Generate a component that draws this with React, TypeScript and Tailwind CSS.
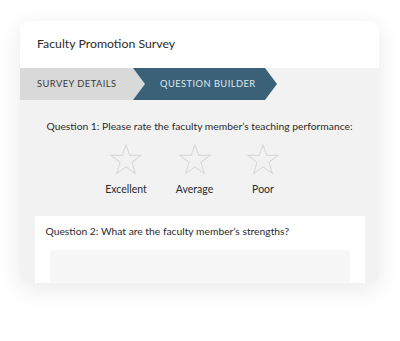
import React from 'react';

const Star: React.FC = () => (
  <svg width="34" height="31" viewBox="0 0 34 31" fill="none" stroke="#d9d9d9" strokeWidth="1.1">
    <polygon points="17,1 20.8,11.4 32,11.4 23,18.3 26.3,29.5 17,22.9 7.7,29.5 11,18.3 2,11.4 13.2,11.4" />
  </svg>
);

const ratings = ['Excellent', 'Average', 'Poor'];

export default function App() {
  return (
    <div className="w-[400px] h-[341px] bg-white pt-[21px] pl-[20px] font-['Lato',sans-serif] text-[#2b2b2b]">
      <div className="w-[359px] h-[262px] rounded-lg overflow-hidden bg-[#f2f2f2] shadow-[0_6px_24px_rgba(0,0,0,0.09)] flex flex-col">
        {/* header */}
        <div className="h-[47px] shrink-0 bg-white flex items-center px-[17px] text-[12.3px]">
          Faculty Promotion Survey
        </div>

        {/* steps */}
        <div className="h-[32px] shrink-0 flex text-[9.3px] tracking-[0.05em] uppercase">
          <div className="w-[126px] h-full bg-[#d9d9d9] text-[#3a3a3a] flex items-center pl-[17px] [clip-path:polygon(0_0,113px_0,126px_50%,113px_100%,0_100%)]">
            Survey Details
          </div>
          <div className="w-[144px] -ml-[13px] h-full bg-[#3b6178] text-[#dfe7ec] flex items-center pl-[27px] [clip-path:polygon(0_0,132px_0,144px_50%,132px_100%,0_100%,12px_50%)]">
            Question Builder
          </div>
        </div>

        {/* body */}
        <div className="flex-1 min-h-0 overflow-hidden flex flex-col items-center pt-[19px]">
          <p className="text-[10.3px] leading-[14px]">
            Question 1: Please rate the faculty member’s teaching performance:
          </p>
          <div className="flex gap-[34.5px] mt-[11px] mr-[10px]">
            {ratings.map((r) => (
              <div key={r} className="w-[34px] flex flex-col items-center">
                <Star />
                <span className="mt-[7px] text-[10.5px] leading-[14px] whitespace-nowrap">{r}</span>
              </div>
            ))}
          </div>

          <div className="mt-[20px] w-[330px] shrink-0 bg-white px-[15px] pt-[8px] h-[80px]">
            <p className="text-[10.3px] leading-[14px] -ml-[4px]">
              Question 2: What are the faculty member’s strengths?
            </p>
            <div className="mt-[12px] h-[50px] bg-[#f7f7f7]" />
          </div>
        </div>
      </div>
    </div>
  );
}
